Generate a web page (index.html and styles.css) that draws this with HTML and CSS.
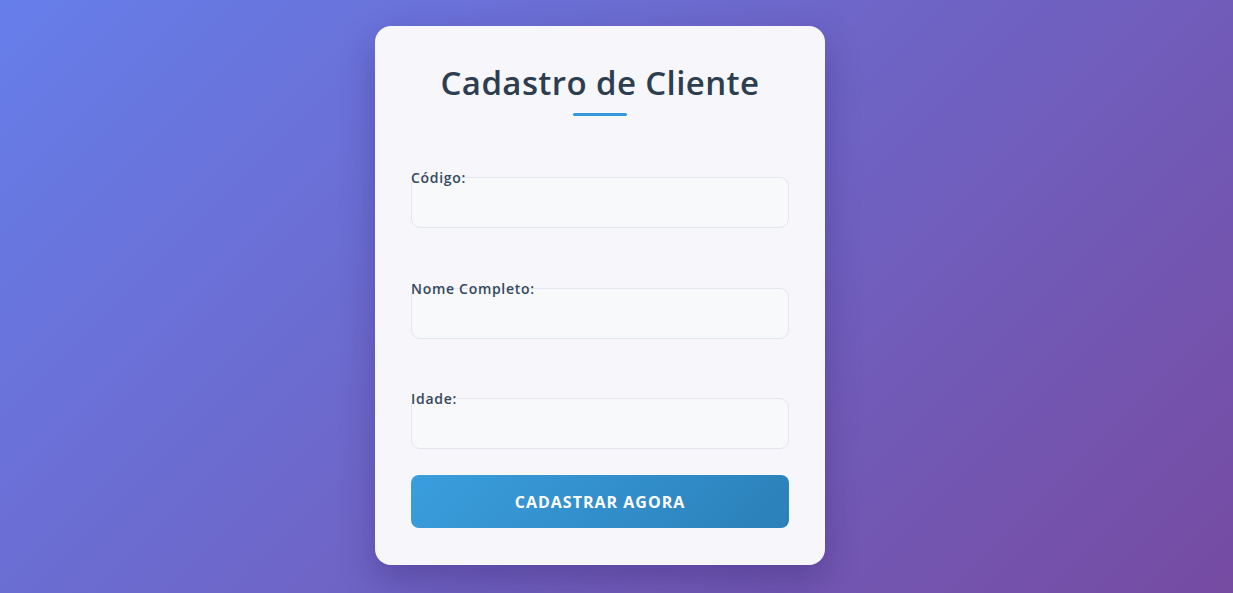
FILE: index.html
```html
<!DOCTYPE html>
<html lang="pt-BR">
<head>
<meta charset="utf-8">
<title>Cadastro de Cliente</title>
<link rel="stylesheet" href="styles.css">
</head>
<body>
<main class="card">
  <header class="card-header">
    <h1 class="title">Cadastro de Cliente</h1>
    <div class="title-bar"></div>
  </header>
  <form class="form">
    <div class="field">
      <label class="label" for="codigo">Código:</label>
      <input class="input" id="codigo" type="text">
    </div>
    <div class="field">
      <label class="label" for="nome">Nome Completo:</label>
      <input class="input" id="nome" type="text">
    </div>
    <div class="field">
      <label class="label" for="idade">Idade:</label>
      <input class="input" id="idade" type="text">
    </div>
    <button class="button" type="button">CADASTRAR AGORA</button>
  </form>
</main>
</body>
</html>
```
FILE: styles.css
```css
* { box-sizing: border-box; }

html, body { height: 100%; }

body {
  margin: 0;
  min-height: 100vh;
  display: flex;
  align-items: center;
  justify-content: center;
  padding: 0 33px 2px 0;
  background: linear-gradient(135deg, #667eea 0%, #764ba2 100%);
  font-family: "Open Sans", "Noto Sans", sans-serif;
}

.card {
  width: 450px;
  padding: 36px 36px 37px;
  background: #f7f7fb;
  border-radius: 16px;
  box-shadow: 0 15px 35px rgba(40, 20, 90, 0.3);
}

.card-header {
  display: flex;
  flex-direction: column;
  align-items: center;
  margin-bottom: 51px;
}

.title {
  margin: 1px 0 0;
  font-size: 33px;
  line-height: 40px;
  font-weight: 600;
  color: #2c3e50;
  letter-spacing: 0.4px;
}

.title-bar {
  width: 54px;
  height: 3px;
  margin-top: 10px;
  background: #3498db;
  border-radius: 2px;
}

.form {
  display: flex;
  flex-direction: column;
}

.field {
  display: flex;
  flex-direction: column;
  margin-bottom: 49.5px;
}

.field:last-of-type { margin-bottom: 26px; }

.label {
  position: relative;
  z-index: 1;
  align-self: flex-start;
  font-size: 14px;
  line-height: 21px;
  font-weight: 600;
  letter-spacing: 0.7px;
  color: #34495e;
  margin-bottom: -11px;
}

.input {
  height: 51px;
  width: 100%;
  border: 1px solid #e3e6ec;
  border-radius: 9px;
  background: #f8f9fb;
  font: inherit;
  padding: 0 14px;
}

.button {
  height: 53px;
  width: 100%;
  border: none;
  border-radius: 8px;
  background: linear-gradient(135deg, #3a9ede 0%, #2b80b8 100%);
  color: #ffffff;
  font-family: inherit;
  font-size: 16px;
  font-weight: 700;
  letter-spacing: 1px;
  cursor: pointer;
}
```
